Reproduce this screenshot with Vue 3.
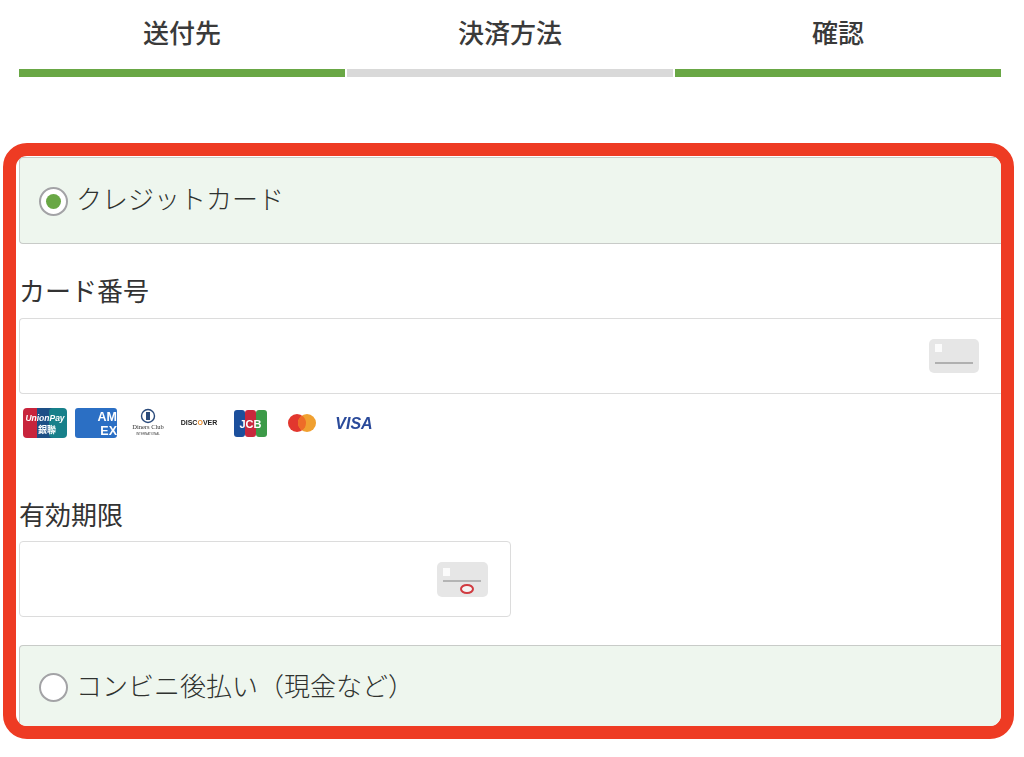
<script setup>
const tabs = [
  { label: '送付先', active: true },
  { label: '決済方法', active: false },
  { label: '確認', active: true }
]
</script>

<template>
  <div class="page">
    <div class="tabs">
      <div v-for="t in tabs" :key="t.label" class="tab">
        <div class="tab-label">{{ t.label }}</div>
        <div class="tab-bar" :class="{ on: t.active }"></div>
      </div>
    </div>

    <div class="frame">
      <div class="method first">
        <span class="radio checked"></span>
        <span class="method-text">クレジットカード</span>
      </div>

      <div class="label l1">カード番号</div>
      <div class="field">
        <svg class="cardicon" width="50" height="34" viewBox="0 0 50 34">
          <rect width="50" height="34" rx="5" fill="#e6e6e6" />
          <rect x="6" y="5" width="7" height="8" fill="#fbfbfb" />
          <rect x="6" y="23" width="38" height="2" fill="#b0b0b0" />
        </svg>
      </div>

      <div class="logos">
        <svg width="44" height="30" viewBox="0 0 44 30">
          <rect width="20" height="30" rx="4" fill="#c8243c" />
          <rect x="14" width="16" height="30" fill="#1d4f86" />
          <rect x="26" width="18" height="30" rx="4" fill="#17808a" />
          <text x="22" y="13" class="lg up">UnionPay</text>
          <text x="24" y="25" class="lg up2">銀聯</text>
        </svg>
        <svg width="42" height="30" viewBox="0 0 42 30">
          <rect width="42" height="30" rx="3" fill="#2b6fc4" />
          <text x="42" y="12.5" class="lg am">AM</text>
          <text x="42" y="27" class="lg am">EX</text>
        </svg>
        <svg width="34" height="30" viewBox="0 0 34 30">
          <circle cx="17" cy="8" r="6.5" fill="none" stroke="#2a4a7a" stroke-width="1.4" />
          <rect x="15" y="4" width="4" height="8" fill="#2a4a7a" />
          <text x="17" y="21" class="lg dc">Diners Club</text>
          <text x="17" y="27" class="lg dc2">INTERNATIONAL</text>
        </svg>
        <svg width="38" height="30" viewBox="0 0 38 30">
          <text x="19" y="17" class="lg disc">DISC<tspan fill="#e88a2a">O</tspan>VER</text>
        </svg>
        <svg width="33" height="27" viewBox="0 0 33 27">
          <rect width="11" height="27" rx="3" fill="#1c4f9c" />
          <rect x="11" width="11" height="27" rx="3" fill="#c8283c" />
          <rect x="22" width="11" height="27" rx="3" fill="#3c9a48" />
          <text x="16.5" y="18" class="lg jcb">JCB</text>
        </svg>
        <svg width="30" height="20" viewBox="0 0 30 20">
          <circle cx="10" cy="10" r="9" fill="#e2372e" />
          <circle cx="20" cy="10" r="9" fill="#f0a030" />
          <path d="M15 2.5a9 9 0 0 1 0 15a9 9 0 0 1 0-15z" fill="#ee6c28" />
        </svg>
        <svg width="38" height="20" viewBox="0 0 38 20">
          <text x="19" y="16" class="lg visa">VISA</text>
        </svg>
      </div>

      <div class="label l2">有効期限</div>
      <div class="field short">
        <svg class="cardicon" width="51" height="37" viewBox="0 0 51 37">
          <rect width="51" height="35" rx="5" fill="#e6e6e6" />
          <rect x="6" y="6" width="7" height="8" fill="#fbfbfb" />
          <rect x="6" y="18" width="38" height="2" fill="#b4b4b4" />
          <ellipse cx="30" cy="27" rx="6" ry="4" fill="#f4f4f4" stroke="#d03a40" stroke-width="2" />
        </svg>
      </div>

      <div class="method second">
        <span class="radio"></span>
        <span class="method-text">コンビニ後払い（現金など）</span>
      </div>
    </div>
  </div>
</template>

<style>
html, body { background: #fff; }
</style>

<style scoped>
.page {
  width: 1024px;
  height: 757px;
  overflow: hidden;
  background: #fff;
  font-family: "Noto Sans CJK JP", "Noto Sans", sans-serif;
  color: #333;
  box-sizing: border-box;
}
.tabs {
  display: flex;
  gap: 2px;
  padding: 0 23px 0 19px;
}
.tab { flex: 1; }
.tab-label {
  height: 69px;
  line-height: 63px;
  text-align: center;
  font-size: 26px;
  font-weight: 500;
  color: #3a3a3a;
}
.tab-bar { height: 8px; background: #d9d9d9; }
.tab-bar.on { background: #69a745; }

.frame {
  margin: 66px 10px 0 3px;
  height: 596px;
  box-sizing: border-box;
  border: 13px solid #ee3b23;
  border-radius: 24px;
  padding: 1px 0 0 3px;
  overflow: hidden;
  display: flex;
  flex-direction: column;
}
.method {
  display: flex;
  align-items: center;
  gap: 8px;
  padding-left: 19px;
  background: #eef6ee;
  border: 1px solid #c8cbc8;
  border-right: none;
  border-radius: 4px 0 0 4px;
  box-sizing: border-box;
  flex: none;
}
.first { height: 87px; }
.second { height: 82px; margin-top: 28px; border-bottom: none; border-radius: 4px 0 0 0; }
.method-text {
  font-size: 26px;
  font-weight: 300;
  color: #2f322f;
  position: relative;
  top: -3px;
}
.second .method-text { top: -2px; }
.radio {
  width: 29px;
  height: 29px;
  border-radius: 50%;
  border: 2px solid #a3a3a6;
  background: #fff;
  box-sizing: border-box;
  position: relative;
  top: 1px;
  flex: none;
}
.radio.checked::after {
  content: "";
  position: absolute;
  inset: 5px;
  border-radius: 50%;
  background: #69a745;
}
.label {
  font-size: 26px;
  line-height: 38px;
  height: 38px;
  color: #333;
  flex: none;
  font-weight: 400;
}
.l1 { margin-top: 27px; }
.l2 { margin-top: 57px; }
.field {
  height: 76px;
  margin-top: 9px;
  box-sizing: border-box;
  border: 1px solid #dcdcdc;
  border-right: none;
  border-radius: 4px 0 0 4px;
  display: flex;
  align-items: center;
  justify-content: flex-end;
  padding-right: 22px;
  flex: none;
}
.field.short {
  width: 492px;
  height: 76px;
  margin-top: 8px;
  border-right: 1px solid #dcdcdc;
  border-radius: 4px;
  padding-right: 22px;
  padding-top: 3px;
}
.logos {
  display: grid;
  grid-template-columns: repeat(7, 51.5px);
  justify-items: center;
  align-items: center;
  height: 30px;
  margin-top: 14px;
  flex: none;
  filter: blur(0.35px);
}
.lg { font-family: "Liberation Sans", sans-serif; text-anchor: middle; }
.up { font-size: 8.5px; font-style: italic; font-weight: 700; fill: #fff; }
.up2 { font-family: "Noto Sans CJK TC", sans-serif; font-size: 9px; font-weight: 700; fill: #fff; }
.am { font-size: 12.5px; font-weight: 700; fill: #fff; text-anchor: end; }
.dc { font-family: "Liberation Serif", serif; font-size: 6.5px; fill: #333; }
.dc2 { font-size: 3px; fill: #444; }
.disc { font-size: 7px; font-weight: 700; fill: #222; }
.jcb { font-size: 11px; font-weight: 700; fill: #fff; }
.visa { font-size: 16px; font-weight: 700; font-style: italic; fill: #2a4a9a; }
</style>
